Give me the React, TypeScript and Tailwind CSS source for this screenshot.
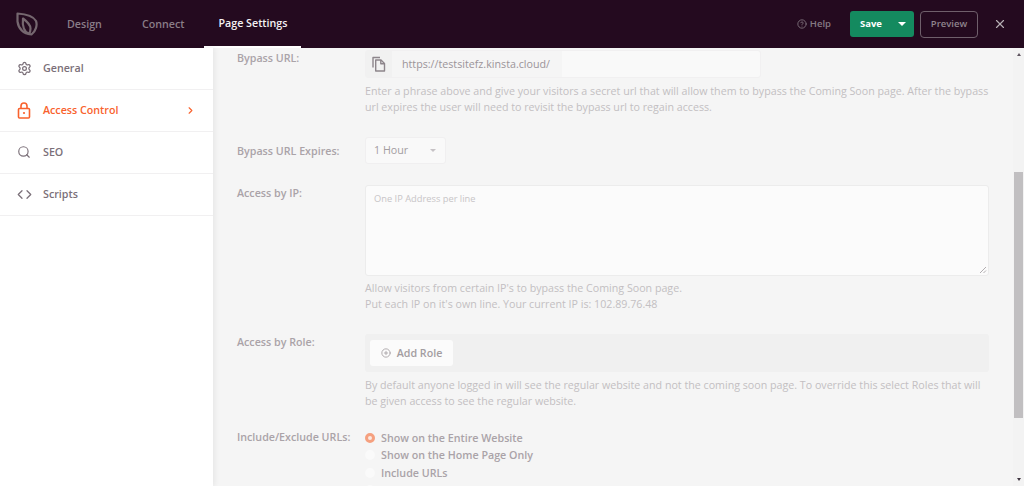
import React from "react";
import { Search, ChevronRight, X, CircleHelp, CirclePlus, Code, Settings } from "lucide-react";

function Logo() {
  return (
    <svg width="22" height="24" viewBox="0 0 22 24" fill="none" stroke="#75676f" strokeWidth="2.2" strokeLinejoin="round">
      <path d="M1.500 1.500C9 2 17 3.500 20 9c1.500 4 0 10-4.500 13.500C8 21.500 2.500 17 1.500 9.500z" />
      <path d="M7 6.500c4 3 7.500 6 7.500 10 0 2-.5 4-1.500 5.500C9 20 6 15 7 6.500z" />
    </svg>
  );
}

function Lock() {
  return (
    <svg width="14" height="17" viewBox="0 0 14 17" fill="none" stroke="#f9622d" strokeWidth="1.600">
      <rect x="1.500" y="6.500" width="11" height="9.500" rx="1" />
      <path d="M4 6.500V4a3 3 0 0 1 6 0v2.500" />
      <circle cx="7" cy="11" r="1.100" fill="#f9622d" stroke="none" />
    </svg>
  );
}

function CopyIcon() {
  return (
    <svg width="14" height="16" viewBox="0 0 14 16" fill="none" stroke="#8d858b" strokeWidth="1.400" strokeLinejoin="round">
      <path d="M1 11.500V1.500h7" />
      <path d="M3.700 4h5.300l3.500 3.500v7.500H3.700z" />
      <path d="M8.800 4v3.700h3.700" />
    </svg>
  );
}

function NavItem({ icon, label, active }: { icon: React.ReactNode; label: string; active?: boolean }) {
  return (
    <div className={`h-[42px] flex items-center border-b border-[#f1f0f1] pl-[17px] pr-[17px] pb-[1px] text-[10.700px] font-semibold ${active ? "text-[#f9622d]" : "text-[#7b7079]"}`}>
      <span className="w-[26px] flex items-center">{icon}</span>
      <span className="flex-1">{label}</span>
      {active && <ChevronRight size={11} strokeWidth={2.500} />}
    </div>
  );
}

function Row({ label, children, className = "" }: { label: string; children: React.ReactNode; className?: string }) {
  return (
    <div className={`flex ${className}`}>
      <div className="w-[128px] shrink-0 text-[10.700px] font-semibold leading-[16px] text-[#aaa3a8]">{label}</div>
      <div className="flex-1 min-w-0">{children}</div>
    </div>
  );
}

function Help({ children }: { children: React.ReactNode }) {
  return <div className="text-[10.680px] leading-[16px] text-[#c3bfc2] whitespace-nowrap">{children}</div>;
}

function Radio({ label, on }: { label?: string; on?: boolean }) {
  return (
    <div className="h-[17.500px] flex items-center gap-[6px] text-[10.700px] font-semibold text-[#aaa3a8]">
      {on ? (
        <span className="w-[10px] h-[10px] rounded-full border-[3px] border-[#f5a07f] bg-[#fbe9e1]" />
      ) : (
        <span className="w-[10px] h-[10px] rounded-full bg-[#fafafa]" />
      )}
      {label && <span>{label}</span>}
    </div>
  );
}

export default function App() {
  return (
    <div className="w-[1024px] h-[486px] overflow-hidden flex flex-col bg-[#f5f5f5] font-['Open_Sans',sans-serif]">
      <header className="h-[48px] shrink-0 bg-[#240a1f] flex items-center pl-[16px] pr-[17px]">
        <Logo />
        <nav className="flex items-center h-full text-[10.700px] font-semibold text-[#8a7d87] ml-[29px]">
          <span>Design</span>
          <span className="ml-[40px]">Connect</span>
          <span className="ml-[20px] px-[14px] h-full flex items-center text-[#f4f1f3] border-b-2 border-white">Page Settings</span>
        </nav>
        <div className="ml-auto flex items-center">
          <span className="flex items-center gap-[3px] text-[9.500px] font-semibold text-[#857983]">
            <CircleHelp size={10} />
            Help
          </span>
          <div className="ml-[19px] w-[64px] h-[26px] rounded-[3px] bg-[#148a5f] flex items-center text-white text-[9.500px] font-bold">
            <span className="pl-[10px] flex-1">Save</span>
            <span className="w-0 h-0 border-x-[4px] border-x-transparent border-t-[4px] border-t-white mr-[8px]" />
          </div>
          <div className="ml-[6px] w-[58px] h-[27px] rounded-[4px] border border-[#6f5f6b] flex items-center justify-center text-[9.500px] font-semibold text-[#8f848d]">Preview</div>
          <X size={14} className="ml-[15px] text-[#b6aeb4]" />
        </div>
      </header>

      <div className="flex-1 min-h-0 flex">
        <aside className="w-[213px] shrink-0 bg-white shadow-[2px_0_5px_rgba(0,0,0,0.06)] z-10">
          <NavItem icon={<Settings size={15} />} label="General" />
          <NavItem icon={<Lock />} label="Access Control" active />
          <NavItem icon={<Search size={14} />} label="SEO" />
          <NavItem icon={<Code size={15} />} label="Scripts" />
        </aside>

        <main className="flex-1 min-w-0 pl-[24px] pr-[24px] pt-[2px]">
          <Row label="Bypass URL:">
            <div className="w-[396px] h-[28px] flex rounded-[3px] border border-[#f1f0f1] bg-[#f9f9f9]">
              <div className="w-[26px] bg-[#f1f1f1] flex items-center justify-center"><CopyIcon /></div>
              <div className="w-[170px] bg-[#f5f5f5] pl-[10px] flex items-center text-[10.700px] text-[#9b9499]">https://testsitefz.kinsta.cloud/</div>
            </div>
            <div className="mt-[5px]">
              <Help>Enter a phrase above and give your visitors a secret url that will allow them to bypass the Coming Soon page. After the bypass<br />url expires the user will need to revisit the bypass url to regain access.</Help>
            </div>
          </Row>
          <Row label="Bypass URL Expires:" className="mt-[22px] items-center">
            <div className="w-[81px] h-[27px] rounded-[3px] border border-[#f0eff0] bg-[#f9f9f9] flex items-center px-[8px] text-[10.700px] text-[#a39da1]">
              <span className="flex-1">1 Hour</span>
              <span className="w-0 h-0 border-x-[3.500px] border-x-transparent border-t-[3.500px] border-t-[#c6c2c5] mr-[1px]" />
            </div>
          </Row>
          <Row label="Access by IP:" className="mt-[21px]">
            <div className="h-[91px] rounded-[3px] border border-[#ececec] bg-[#fbfbfb] px-[8px] pt-[6px] text-[9.300px] text-[#c8c5c7] relative">
              One IP Address per line
              <svg className="absolute right-[1px] bottom-[1px]" width="8" height="8" viewBox="0 0 8 8" stroke="#a9a5a8" strokeWidth="0.900">
                <path d="M1 7 7 1M4.500 7 7 4.500" />
              </svg>
            </div>
            <div className="mt-[4px]">
              <Help>Allow visitors from certain IP's to bypass the Coming Soon page.<br />Put each IP on it's own line. Your current IP is: 102.89.76.48</Help>
            </div>
          </Row>
          <Row label="Access by Role:" className="mt-[22px]">
            <div className="h-[38px] rounded-[3px] bg-[#f0f0f0] flex items-center pl-[5px]">
              <div className="w-[83px] h-[26px] rounded-[3px] bg-[#fbfbfb] flex items-center justify-center gap-[6px] text-[10.700px] font-semibold text-[#a39da1]">
                <CirclePlus size={10} />
                Add Role
              </div>
            </div>
            <div className="mt-[5px]">
              <Help>By default anyone logged in will see the regular website and not the coming soon page. To override this select Roles that will<br />be given access to see the regular website.</Help>
            </div>
          </Row>
          <Row label="Include/Exclude URLs:" className="mt-[20px]">
            <Radio label="Show on the Entire Website" on />
            <Radio label="Show on the Home Page Only" />
            <Radio label="Include URLs" />
            <Radio />
          </Row>
        </main>

        <div className="w-[11px] shrink-0 bg-[#f3f3f3] flex flex-col items-center pt-[5px] pb-[5px]">
          <span className="w-0 h-0 border-x-[2.500px] border-x-transparent border-b-[3px] border-b-[#5f5560]" />
          <div className="w-full px-[1px] mt-[116px] h-[246px]"><div className="h-full bg-[#c1bfc1]" /></div>
          <span className="mt-auto w-0 h-0 border-x-[2.500px] border-x-transparent border-t-[3px] border-t-[#3f3540]" />
        </div>
      </div>
    </div>
  );
}
